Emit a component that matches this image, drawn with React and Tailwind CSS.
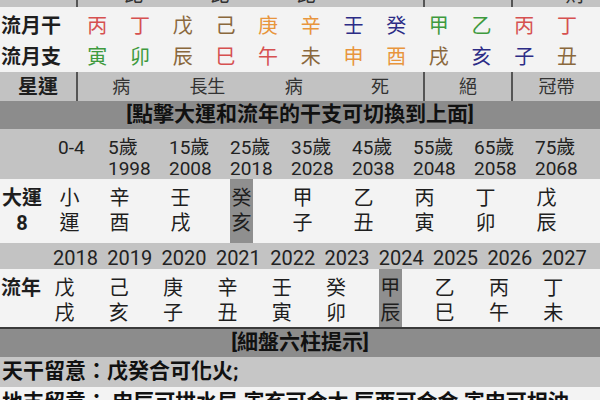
const C = {
  r: "text-[#d65050]",
  b: "text-[#8a683c]",
  o: "text-[#e8953c]",
  u: "text-[#2c2c86]",
  g: "text-[#3e9a3e]",
};

const stems = [["丙", "r"], ["丁", "r"], ["戊", "b"], ["己", "b"], ["庚", "o"], ["辛", "o"], ["壬", "u"], ["癸", "u"], ["甲", "g"], ["乙", "g"], ["丙", "r"], ["丁", "r"]];
const branches = [["寅", "g"], ["卯", "g"], ["辰", "b"], ["巳", "r"], ["午", "r"], ["未", "b"], ["申", "o"], ["酉", "o"], ["戌", "b"], ["亥", "u"], ["子", "u"], ["丑", "b"]];

const ages = [
  ["0-4", ""],
  ["5歲", "1998"],
  ["15歲", "2008"],
  ["25歲", "2018"],
  ["35歲", "2028"],
  ["45歲", "2038"],
  ["55歲", "2048"],
  ["65歲", "2058"],
  ["75歲", "2068"],
];
const dayun = [["小", "運"], ["辛", "酉"], ["壬", "戌"], ["癸", "亥"], ["甲", "子"], ["乙", "丑"], ["丙", "寅"], ["丁", "卯"], ["戊", "辰"]];
const years = ["2018", "2019", "2020", "2021", "2022", "2023", "2024", "2025", "2026", "2027"];
const liunian = [["戊", "戌"], ["己", "亥"], ["庚", "子"], ["辛", "丑"], ["壬", "寅"], ["癸", "卯"], ["甲", "辰"], ["乙", "巳"], ["丙", "午"], ["丁", "未"]];

const App = () => {
  return (
    <main className="w-[600px] h-[400px] overflow-hidden bg-[#f3f3f3] text-[#1e1e1e] font-['Roboto','Noto_Sans_CJK_TC',sans-serif]">
      {/* cut-off row above */}
      <section className="h-[7px] overflow-hidden bg-[#c3c3c3] flex text-[20px] leading-[20px] text-[#333]">
        <div className="w-[78px] border-r-2 border-[#555]"></div>
        <div className="w-[347px] border-r-2 border-[#555] flex">
          {["比", "比", "比", ""].map((t, i) => (
            <div key={i} className="flex-1 pl-[24px] text-center -mt-[15px]">{t}</div>
          ))}
        </div>
        <div className="w-[88px] border-r-2 border-[#555]"></div>
        <div className="flex-1 pl-[38px] text-center -mt-[15px]">財</div>
      </section>

      <section className="pt-[3px] bg-[#f3f3f3]">
        <div className="grid grid-cols-[76px_repeat(12,42.7px)] h-[31px] items-center text-[20px]">
          <div className="font-bold pl-[1px]">流月干</div>
          {stems.map(([t, c], i) => (
            <div key={i} className={`text-center ${C[c]}`}>{t}</div>
          ))}
        </div>
        <div className="grid grid-cols-[76px_repeat(12,42.7px)] h-[31px] items-center text-[20px]">
          <div className="font-bold pl-[1px]">流月支</div>
          {branches.map(([t, c], i) => (
            <div key={i} className={`text-center ${C[c]}`}>{t}</div>
          ))}
        </div>
      </section>

      <section className="h-[29px] bg-[#c2c2c2] flex items-stretch">
        <div className="w-[78px] border-r-2 border-[#555] flex items-center justify-center font-bold text-[20px]">星運</div>
        <div className="w-[347px] border-r-2 border-[#555] flex text-[18px] text-[#333]">
          {["病", "長生", "病", "死"].map((t, i) => (
            <div key={i} className="flex-1 flex items-center justify-center">{t}</div>
          ))}
        </div>
        <div className="w-[88px] border-r-2 border-[#555] flex items-center justify-center text-[18px] text-[#333]">絕</div>
        <div className="flex-1 flex items-center justify-center text-[18px] text-[#333]">冠帶</div>
      </section>

      <section className="h-[28px] bg-[#8c8c8c] flex items-center justify-center font-bold text-[21px] text-[#111]">
        [點擊大運和流年的干支可切換到上面]
      </section>

      <section className="h-[50px] bg-[#c3c3c3] pt-[8px] grid grid-cols-[58px_50px_repeat(8,61px)] text-[19px] leading-[21px] text-[#222]">
        <div></div>
        {ages.map(([a, y], i) => (
          <div key={i}>
            <div>{a}</div>
            <div>{y}</div>
          </div>
        ))}
      </section>

      <section className="h-[64px] bg-[#f3f3f3] grid grid-cols-[58px_50px_repeat(8,61px)] text-[20px] leading-[25px]">
        <div className="w-[44px] pt-[7px] text-center font-bold">
          <div>大運</div>
          <div>8</div>
        </div>
        {dayun.map(([s, b], i) => (
          <div key={i} className="h-full">
            <div className={`h-full w-[23px] pt-[7px] text-center ${i === 3 ? "bg-[#8f8f8f]" : ""}`}>
              <div>{s}</div>
              <div>{b}</div>
            </div>
          </div>
        ))}
      </section>

      <section className="h-[26px] bg-[#c3c3c3] grid grid-cols-[53px_repeat(10,54.3px)] items-center text-[20px] text-[#222]">
        <div></div>
        {years.map((y) => (
          <div key={y}>{y}</div>
        ))}
      </section>

      <section className="h-[60px] bg-[#f3f3f3] border-b-2 border-[#3a3a3a] grid grid-cols-[53px_repeat(10,54.3px)] text-[20px] leading-[25px]">
        <div className="pt-[7px] pl-[1px] font-bold">流年</div>
        {liunian.map(([s, b], i) => (
          <div key={i} className="h-full">
            <div className={`h-full w-[23px] pt-[7px] text-center ${i === 6 ? "bg-[#8f8f8f]" : ""}`}>
              <div>{s}</div>
              <div>{b}</div>
            </div>
          </div>
        ))}
      </section>

      <section className="h-[28px] bg-[#8c8c8c] flex items-center justify-center font-bold text-[21px] text-[#111]">
        [細盤六柱提示]
      </section>

      <section className="h-[30px] bg-[#c6c6c6] flex items-center pl-[2px] font-bold text-[21px] text-[#111]">
        天干留意：戊癸合可化火;
      </section>

      <section className="h-[30px] bg-[#f3f3f3] pt-[2px] pl-[2px] font-bold text-[21px] leading-[26px] text-[#111] whitespace-nowrap">
        地支留意： 申辰可拱水局,寅亥可合木,辰酉可合金,寅申可相沖
      </section>
    </main>
  );
};

export default App;
